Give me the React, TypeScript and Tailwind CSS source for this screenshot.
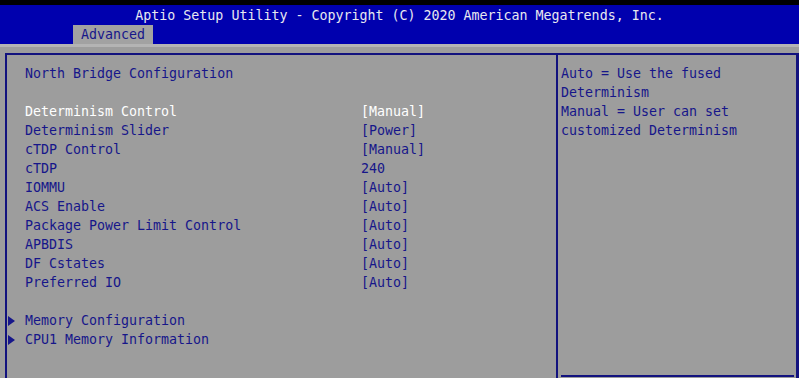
import React from "react";

const settings: { label: string; value: string; active?: boolean }[] = [
  { label: "Determinism Control", value: "[Manual]", active: true },
  { label: "Determinism Slider", value: "[Power]" },
  { label: "cTDP Control", value: "[Manual]" },
  { label: "cTDP", value: "240" },
  { label: "IOMMU", value: "[Auto]" },
  { label: "ACS Enable", value: "[Auto]" },
  { label: "Package Power Limit Control", value: "[Auto]" },
  { label: "APBDIS", value: "[Auto]" },
  { label: "DF Cstates", value: "[Auto]" },
  { label: "Preferred IO", value: "[Auto]" },
];

const submenus = ["Memory Configuration", "CPU1 Memory Information"];

const helpLines = [
  "Auto = Use the fused",
  "Determinism",
  "Manual = User can set",
  "customized Determinism",
];

// small solid arrow used for submenu entries
const Arrow = () => (
  <svg width="8" height="10" viewBox="0 0 8 10" className="ml-[1px]">
    <path d="M0 0 L7 5 L0 10 Z" fill="#16168a" />
  </svg>
);

export default function App() {
  return (
    <div className="w-[799px] h-[378px] overflow-hidden bg-[#9d9d9d] flex flex-col font-['DejaVu_Sans_Mono','Liberation_Mono',monospace] text-[13.3px] leading-[19px] text-[#16168a]">
      <div className="h-[5px] bg-black shrink-0" />
      <div className="h-[39px] bg-[#0000ae] flex flex-col shrink-0">
        <div className="h-[20px] pt-[1px] text-center text-[#e8e8f0]">
          Aptio Setup Utility - Copyright (C) 2020 American Megatrends, Inc.
        </div>
        <div className="h-[19px] pl-[73px] flex">
          <div className="bg-[#a2a2a2] px-[8px]">Advanced</div>
        </div>
      </div>
      <div className="h-[9px] shrink-0 border-t-[3px] border-[#b4b4b4]" />
      <div className="flex-1 ml-[5px] flex border-t-2 border-l-2 border-[#12127e]">
        <div className="w-[549px] pt-[9px] flex flex-col">
          <div className="pl-[18px]">North Bridge Configuration</div>
          <div className="h-[19px]" />
          {settings.map((s) => (
            <div
              key={s.label}
              className={`flex pl-[18px] ${s.active ? "text-white" : ""}`}
            >
              <span className="w-[336px]">{s.label}</span>
              <span>{s.value}</span>
            </div>
          ))}
          <div className="h-[19px]" />
          {submenus.map((m) => (
            <div key={m} className="flex items-center">
              <span className="w-[18px] flex items-center">
                <Arrow />
              </span>
              <span>{m}</span>
            </div>
          ))}
        </div>
        <div className="flex-1 flex flex-col border-l-2 border-r-[3px] border-[#12127e]">
          <div className="flex-1 pl-[3px] pt-[9px]">
            {helpLines.map((l) => (
              <div key={l}>{l}</div>
            ))}
          </div>
          <div className="ml-[3px] mr-[2px] mb-[1px] h-[2px] bg-[#12127e]" />
        </div>
      </div>
    </div>
  );
}
